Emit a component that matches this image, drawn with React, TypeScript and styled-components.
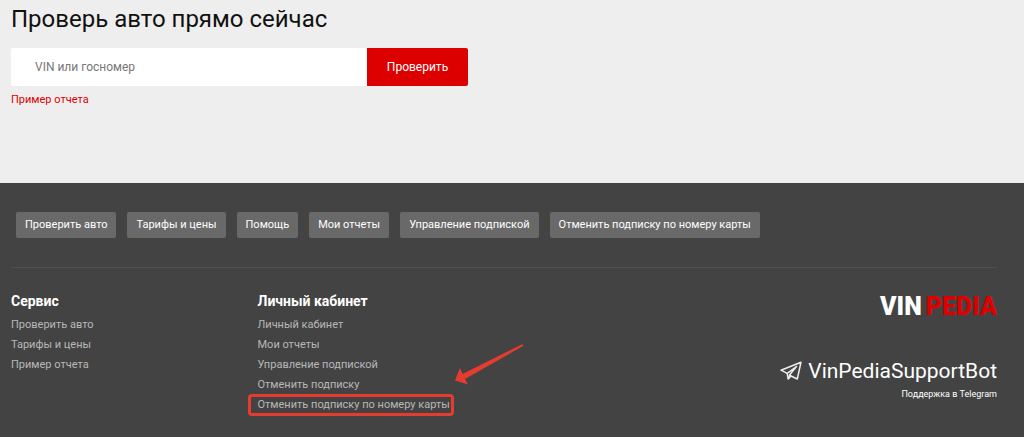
import React from "react";
import styled, { createGlobalStyle } from "styled-components";

const GlobalStyle = createGlobalStyle`
  * { box-sizing: border-box; }
  body {
    margin: 0;
    background: #434343;
    color: #111;
    font-family: Roboto, "Liberation Sans", sans-serif;
    font-size: 11px;
  }
`;

const Hero = styled.section`
  background: #eee;
  padding: 4px 27px 73px 11px;
`;

const Title = styled.h1`
  margin: 0 0 14px;
  font-size: 24px;
  line-height: 30px;
  font-weight: 400;
`;

const SearchForm = styled.form`
  display: flex;
  max-width: 457px;
  height: 38px;
  margin-bottom: 4px;
`;

const SearchInput = styled.input`
  flex: 1;
  min-width: 0;
  border: 0;
  border-radius: 2px 0 0 2px;
  padding: 0 24px;
  background: #fff;
  font: inherit;
  font-size: 12px;
  &::placeholder { color: #777; opacity: 1; }
`;

const SearchButton = styled.button`
  width: 101px;
  border: 0;
  border-radius: 0 2px 2px 0;
  background: #d00;
  color: #fff;
  font: inherit;
  font-size: 12px;
`;

const SampleLink = styled.a`
  display: block;
  width: fit-content;
  line-height: 20px;
  color: #d00;
  text-decoration: none;
`;

const Footer = styled.footer`
  padding: 29px 27px 0 11px;
  color: #fff;
`;

const QuickNav = styled.nav`
  display: flex;
  flex-wrap: wrap;
  gap: 11px;
  padding: 0 5px 29px;
`;

const QuickLink = styled.a`
  padding: 0 9px;
  border-radius: 2px;
  background: #696969;
  color: #fff;
  line-height: 26px;
  text-decoration: none;
`;

const Columns = styled.div`
  display: grid;
  grid-template-columns: 1fr 1fr 2fr;
  min-height: 170px;
  padding: 23px 0;
  border-top: 1px solid #505050;
  border-bottom: 1px solid #505050;
`;

const ColumnTitle = styled.h2`
  margin: 0 0 4px;
  font-size: 14px;
  line-height: 20px;
  font-weight: 700;
`;

const LinkList = styled.ul`
  margin: 0;
  padding: 0;
  list-style: none;
`;

const LinkItem = styled.li`
  position: relative;
  width: fit-content;
  line-height: 20px;
  white-space: nowrap;
`;

const FooterLink = styled.a`
  color: #b8b8b8;
  text-decoration: none;
`;

const Highlight = styled.span`
  position: absolute;
  inset: -1px -4px -1px -10px;
  border: 3px solid #e63c30;
  border-radius: 4px;
  pointer-events: none;
`;

const Arrow = styled.svg`
  position: absolute;
  left: calc(100% - 6px);
  bottom: 100%;
  width: 80px;
  height: 52px;
  pointer-events: none;
`;

const Brand = styled.div`
  display: flex;
  flex-direction: column;
  align-items: flex-end;
`;

const Logo = styled.a`
  display: flex;
  gap: 4px;
  margin-bottom: 34px;
  color: #fff;
  font-size: 25px;
  line-height: 32px;
  font-weight: 900;
  text-decoration: none;
`;

const LogoAccent = styled.span`
  color: #d00;
`;

const Support = styled.a`
  display: flex;
  align-items: center;
  gap: 6px;
  color: #fff;
  font-size: 21px;
  line-height: 28px;
  text-decoration: none;
`;

const SupportNote = styled.span`
  font-size: 9px;
  line-height: 18px;
`;

const PlaneIcon = () => (
  <svg width="22" height="20" viewBox="0 0 22 20" fill="none" stroke="#eee" strokeWidth="1.5" strokeLinejoin="round" aria-hidden="true">
    <path d="M1 9.2 21 1.2 17.3 18 11 15 8.2 18 7.2 12.4Z" />
    <path d="M7.2 12.4 16.5 5.5 9.7 13.7 8.2 18M9.7 13.7 11 15" />
  </svg>
);

const quickLinks = [
  "Проверить авто",
  "Тарифы и цены",
  "Помощь",
  "Мои отчеты",
  "Управление подпиской",
  "Отменить подписку по номеру карты",
];

const columns = [
  { title: "Сервис", links: ["Проверить авто", "Тарифы и цены", "Пример отчета"] },
  {
    title: "Личный кабинет",
    links: ["Личный кабинет", "Мои отчеты", "Управление подпиской", "Отменить подписку", "Отменить подписку по номеру карты"],
    marked: 4,
  },
];

export default function App() {
  return (
    <>
      <GlobalStyle />
      <Hero>
        <Title>Проверь авто прямо сейчас</Title>
        <SearchForm onSubmit={(e) => e.preventDefault()}>
          <SearchInput type="text" placeholder="VIN или госномер" aria-label="VIN или госномер" />
          <SearchButton type="submit">Проверить</SearchButton>
        </SearchForm>
        <SampleLink href="#sample">Пример отчета</SampleLink>
      </Hero>
      <Footer>
        <QuickNav>
          {quickLinks.map((label) => (
            <QuickLink key={label} href="#nav">{label}</QuickLink>
          ))}
        </QuickNav>
        <Columns>
          {columns.map((column) => (
            <div key={column.title}>
              <ColumnTitle>{column.title}</ColumnTitle>
              <LinkList>
                {column.links.map((label, i) => (
                  <LinkItem key={label}>
                    <FooterLink href="#link">{label}</FooterLink>
                    {column.marked === i && (
                      <>
                        <Highlight />
                        <Arrow viewBox="0 0 80 52" aria-hidden="true">
                          <path d="M11 37.5 16 25 18.5 31 77.5 1.5Q80 1 79 3L21 36 24 41.5Z" fill="#e63c30" />
                        </Arrow>
                      </>
                    )}
                  </LinkItem>
                ))}
              </LinkList>
            </div>
          ))}
          <Brand>
            <Logo href="#home">
              <span>VIN</span>
              <LogoAccent>PEDIA</LogoAccent>
            </Logo>
            <Support href="#telegram">
              <PlaneIcon />
              VinPediaSupportBot
            </Support>
            <SupportNote>Поддержка в Telegram</SupportNote>
          </Brand>
        </Columns>
      </Footer>
    </>
  );
}
